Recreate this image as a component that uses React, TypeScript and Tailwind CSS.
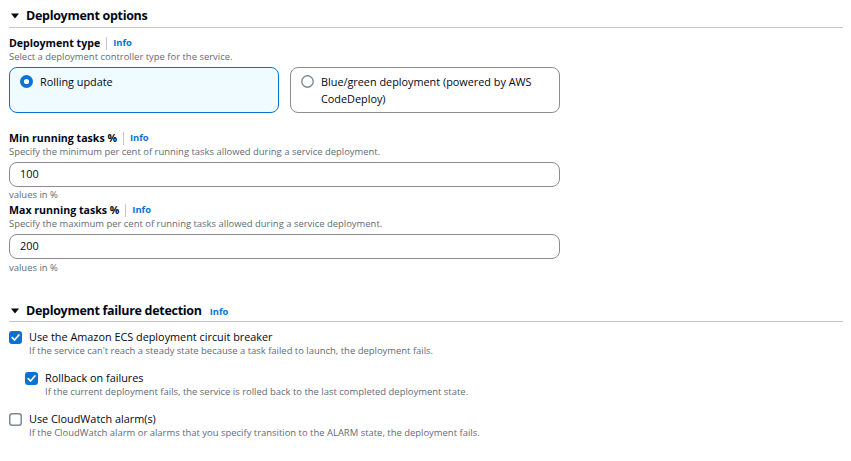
import React from 'react'

const font = {fontFamily: '"Open Sans", "Noto Sans", Arial, sans-serif'}

const Caret = () => (
    <svg width="10" height="10" viewBox="0 0 10 10" className="shrink-0">
        <path d="M1 2.5h8L5 7.5z" fill="#000716" />
    </svg>
)

const Info = () => (
    <span className="text-[9.4px] font-bold leading-[14px] text-[#0972d3]">Info</span>
)

const FieldLabel = ({text}: {text: string}) => (
    <div className="flex items-center h-[14px]">
        <span className="text-[10.6px] font-bold text-[#000716] leading-[14px]">{text}</span>
        <span className="mx-[6px] h-[13px] w-px bg-[#c6c6cd]" />
        <Info />
    </div>
)

const Desc = ({children, className = ''}: {children: React.ReactNode; className?: string}) => (
    <div className={'text-[9.45px] leading-[13px] text-[#5f6b7a] ' + className}>{children}</div>
)

const Radio = ({checked}: {checked: boolean}) => (
    <svg width="13" height="13" viewBox="0 0 13 13" className="shrink-0 mt-[2px]">
        {checked ? (
            <>
                <circle cx="6.5" cy="6.5" r="6.5" fill="#0972d3" />
                <circle cx="6.5" cy="6.5" r="2.6" fill="#fff" />
            </>
        ) : (
            <circle cx="6.5" cy="6.5" r="5.7" fill="#fff" stroke="#7d8998" strokeWidth="1.4" />
        )}
    </svg>
)

const Checkbox = ({checked}: {checked: boolean}) => (
    <svg width="13" height="13" viewBox="0 0 13 13" className="shrink-0 mt-[2px]">
        {checked ? (
            <>
                <rect x="0" y="0" width="13" height="13" rx="3" fill="#0972d3" />
                <path d="M3.2 6.6l2.3 2.4 4.4-5" fill="none" stroke="#fff" strokeWidth="1.8" strokeLinecap="round" strokeLinejoin="round" />
            </>
        ) : (
            <rect x="0.75" y="0.75" width="11.5" height="11.5" rx="2.5" fill="#fff" stroke="#7d8998" strokeWidth="1.5" />
        )}
    </svg>
)

const Tile = ({checked, children}: {checked: boolean; children: React.ReactNode}) => (
    <div
        className={
            checked
                ? 'h-[46px] rounded-[8px] border border-[#0972d3] bg-[#f0fbff] pl-[10px] pt-[5px] pr-3 flex gap-[7px]'
                : 'h-[46px] rounded-[8px] border border-[#8c8c94] bg-white pl-[10px] pt-[5px] pr-3 flex gap-[7px]'
        }
    >
        <Radio checked={checked} />
        <span className="text-[10.85px] leading-[17px] text-[#000716]">{children}</span>
    </div>
)

const Input = ({value}: {value: string}) => (
    <div className="w-[551px] h-[25px] rounded-[8px] border border-[#8c8c94] bg-white flex items-center px-[10px] text-[10.85px] text-[#000716]">
        {value}
    </div>
)

const CheckRow = ({checked, label, desc, className = ''}: {checked: boolean; label: string; desc: string; className?: string}) => (
    <div className={'flex gap-[7px] ' + className}>
        <Checkbox checked={checked} />
        <div>
            <div className="text-[10.85px] leading-[15px] text-[#000716]">{label}</div>
            <Desc>{desc}</Desc>
        </div>
    </div>
)

const SectionHeader = ({title, info, className = ''}: {title: string; info?: boolean; className?: string}) => (
    <div className={'border-b border-[#c6c6cd] flex items-start gap-[6px] ' + className}>
        <div className="h-[18px] flex items-center pl-[1px]">
            <Caret />
        </div>
        <span className="text-[12.5px] tracking-[-0.3px] font-bold leading-[18px] text-[#000716]">{title}</span>
        {info && (
            <span className="ml-[2px] mt-[3px] flex">
                <Info />
            </span>
        )}
    </div>
)

export default function App() {
    return (
        <div className="w-[851px] h-[461px] bg-white pl-[9px] pr-[8px] overflow-hidden" style={font}>
            <SectionHeader title="Deployment options" className="h-[28px] pt-[7px]" />

            <div className="mt-[8px]">
                <FieldLabel text="Deployment type" />
                <Desc>Select a deployment controller type for the service.</Desc>
            </div>

            <div className="mt-[4px] grid grid-cols-[270px_270px] gap-[11px]">
                <Tile checked>Rolling update</Tile>
                <Tile checked={false}>
                    Blue/green deployment (powered by AWS
                    <br />
                    CodeDeploy)
                </Tile>
            </div>

            <div className="mt-[18px]">
                <FieldLabel text="Min running tasks %" />
                <Desc>Specify the minimum per cent of running tasks allowed during a service deployment.</Desc>
                <div className="mt-[4px]">
                    <Input value="100" />
                </div>
                <Desc className="mt-[1px]">values in %</Desc>
            </div>

            <div className="mt-[2px]">
                <FieldLabel text="Max running tasks %" />
                <Desc>Specify the maximum per cent of running tasks allowed during a service deployment.</Desc>
                <div className="mt-[4px]">
                    <Input value="200" />
                </div>
                <Desc className="mt-[2px]">values in %</Desc>
            </div>

            <SectionHeader title="Deployment failure detection" info className="mt-[28px] h-[20px]" />

            <CheckRow
                className="mt-[7px]"
                checked
                label="Use the Amazon ECS deployment circuit breaker"
                desc="If the service can't reach a steady state because a task failed to launch, the deployment fails."
            />
            <CheckRow
                className="mt-[13px] ml-[16px]"
                checked
                label="Rollback on failures"
                desc="If the current deployment fails, the service is rolled back to the last completed deployment state."
            />
            <CheckRow
                className="mt-[13px]"
                checked={false}
                label="Use CloudWatch alarm(s)"
                desc="If the CloudWatch alarm or alarms that you specify transition to the ALARM state, the deployment fails."
            />
        </div>
    )
}
